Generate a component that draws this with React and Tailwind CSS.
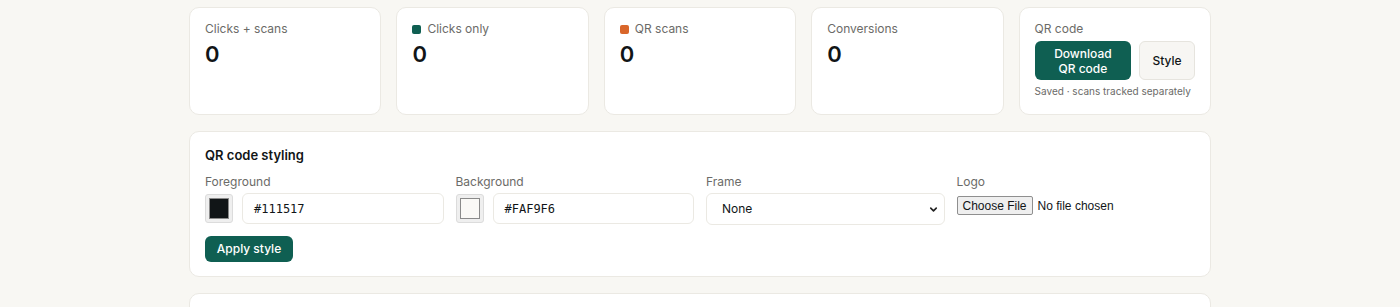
import { ChevronDown } from 'lucide-react';

const font = { fontFamily: 'Inter, "Noto Sans", sans-serif' };
const nativeFont = { fontFamily: '"Liberation Sans", Arial, sans-serif' };

const StatCard = ({ label, dot }) => (
  <div className="bg-white rounded-[10px] border border-[#ebe9e3] px-[15px] pt-[13px] pb-4">
    <div className="flex items-center gap-[6px] text-[12px] leading-4 text-[#6b6b68]">
      {dot && <span className={`w-[9px] h-[9px] rounded-[2px] ${dot}`}></span>}
      <span>{label}</span>
    </div>
    <div className="mt-[3px] text-[22px] leading-7 font-semibold text-[#111517]">0</div>
  </div>
);

const ColorField = ({ label, color, value }) => (
  <div className="flex flex-col">
    <label className="text-[12px] leading-4 text-[#6b6b68] mb-[3px]">{label}</label>
    <div className="flex items-center gap-[9px]">
      <div className="w-[28px] h-[29px] shrink-0 bg-[#efefef] border border-[#dcdcdc] rounded-[3px] p-[3px] flex">
        <div className={`flex-1 border border-[#8a8a8a] ${color}`}></div>
      </div>
      <div className="flex-1 h-[31px] border border-[#ebe9e3] rounded-[6px] bg-white flex items-center px-[11px] text-[12px] text-[#111517]" style={{ fontFamily: '"DejaVu Sans Mono", "Liberation Mono", monospace' }}>
        {value}
      </div>
    </div>
  </div>
);

export default function App() {
  return (
    <div className="min-h-screen bg-[#f8f7f3] pt-[7px]" style={font}>
      <div className="w-[1022px] mx-auto">
        {/* stats row */}
        <div className="grid grid-cols-5 gap-[15px]">
          <StatCard label="Clicks + scans" />
          <StatCard label="Clicks only" dot="bg-[#0f5f52]" />
          <StatCard label="QR scans" dot="bg-[#d9662a]" />
          <StatCard label="Conversions" />
          <div className="bg-white rounded-[10px] border border-[#ebe9e3] px-[15px] pt-[13px] pb-4">
            <div className="text-[12px] leading-4 text-[#6b6b68]">QR code</div>
            <div className="flex gap-2 mt-[4px]">
              <button className="w-[97px] h-[39px] bg-[#0f5f52] text-white rounded-[6px] text-[12px] leading-[15px] font-medium">
                Download<br />QR code
              </button>
              <button className="w-[56px] h-[39px] bg-[#f7f6f3] border border-[#e6e4de] rounded-[6px] text-[12px] font-medium text-[#111517]">
                Style
              </button>
            </div>
            <div className="mt-[4px] text-[10px] leading-[14px] text-[#6b6b68]">Saved · scans tracked separately</div>
          </div>
        </div>

        {/* styling panel */}
        <div className="mt-4 bg-white rounded-[10px] border border-[#ebe9e3] px-[15px] pt-[15px] pb-[14px]">
          <h3 className="text-[13px] leading-4 font-semibold text-[#111517]">QR code styling</h3>
          <div className="grid grid-cols-4 gap-3 mt-[11px]">
            <ColorField label="Foreground" color="bg-[#111517]" value="#111517" />
            <ColorField label="Background" color="bg-[#faf9f6]" value="#FAF9F6" />
            <div className="flex flex-col">
              <label className="text-[12px] leading-4 text-[#6b6b68] mb-[3px]">Frame</label>
              <div className="h-[32px] border border-[#ebe9e3] rounded-[6px] bg-white flex items-center justify-between pl-[15px] pr-[5px] text-[12px] text-[#111517]">
                <span>None</span>
                <ChevronDown className="w-[11px] h-[11px] text-[#222]" strokeWidth={3.5} />
              </div>
            </div>
            <div className="flex flex-col">
              <label className="text-[12px] leading-4 text-[#6b6b68] mb-[3px]">Logo</label>
              <div className="flex items-center gap-[5px] mt-[3px] text-[12px] text-[#111517]" style={nativeFont}>
                <span className="px-[5px] h-[19px] flex items-center bg-[#efefef] border border-[#8f8f8f] rounded-[2px]">Choose File</span>
                <span>No file chosen</span>
              </div>
            </div>
          </div>
          <button className="mt-[11px] w-[88px] h-[26px] bg-[#0f5f52] text-white rounded-[6px] text-[12px] font-medium">
            Apply style
          </button>
        </div>

        <div className="mt-4 h-[40px] bg-white rounded-[10px] border border-[#ebe9e3]"></div>
      </div>
    </div>
  );
}
